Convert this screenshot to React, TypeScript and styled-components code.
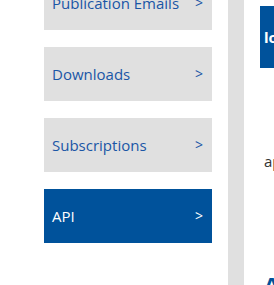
import React from "react";
import styled, { createGlobalStyle } from "styled-components";

const Global = createGlobalStyle`
  html, body { margin: 0; padding: 0; background: #fff; overflow: hidden; }
  body { font-family: "Open Sans", "Liberation Sans", sans-serif; }
`;

const Page = styled.div`
  display: flex;
  align-items: stretch;
  width: 274px;
  height: 285px;
  overflow: hidden;
  padding-left: 44px;
  box-sizing: border-box;
`;

const Menu = styled.nav`
  display: flex;
  flex-direction: column;
  gap: 17px;
  width: 168px;
  flex: none;
  margin-top: -24px;
`;

const Item = styled.a<{ $active?: boolean }>`
  display: flex;
  flex: none;
  align-items: center;
  justify-content: space-between;
  height: 54px;
  padding: 0 9px 0 8px;
  box-sizing: border-box;
  background: ${(p) => (p.$active ? "#00529b" : "#e0e0e0")};
  color: ${(p) => (p.$active ? "#ffffff" : "#1a56a6")};
  font-size: 15px;
  font-weight: 400;
  line-height: 1;
  text-decoration: none;
  white-space: nowrap;
`;

const Chevron = styled.span`
  font-size: 14px;
`;

const Divider = styled.div`
  width: 16px;
  flex: none;
  margin-left: 16px;
  background: #e0e0e0;
`;

const Content = styled.div`
  flex: none;
  width: 200px;
  margin-left: 16px;
  padding-top: 6px;
`;

const Banner = styled.div`
  height: 62px;
  background: #00529b;
  color: #fff;
  display: flex;
  align-items: center;
  padding-left: 4px;
  font-size: 15px;
  font-weight: 700;
`;

const Para = styled.p`
  margin: 86px 0 0 4px;
  font-size: 15px;
  line-height: 1;
  color: #333;
`;

const Heading = styled.h2`
  margin: 104px 0 0 4px;
  font-size: 22px;
  line-height: 1;
  font-weight: 700;
  color: #00529b;
`;

const items = ["Publication Emails", "Downloads", "Subscriptions", "API"];

export default function App() {
  return (
    <>
      <Global />
      <Page>
        <Menu>
          {items.map((t) => (
            <Item key={t} $active={t === "API"} href="#">
              <span>{t}</span>
              <Chevron>&gt;</Chevron>
            </Item>
          ))}
        </Menu>
        <Divider />
        <Content>
          <Banner>log in</Banner>
          <Para>api key</Para>
          <Heading>API</Heading>
        </Content>
      </Page>
    </>
  );
}
